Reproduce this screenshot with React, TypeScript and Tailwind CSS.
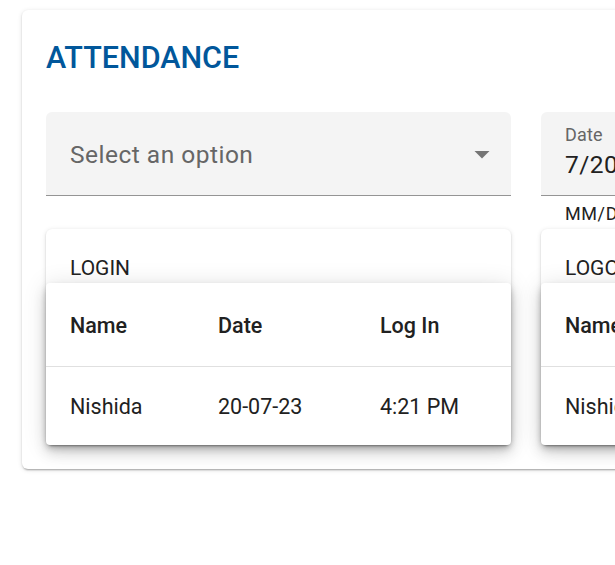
const rows = [{ name: 'Nishida', date: '20-07-23', time: '4:21 PM' }];

function LogTable({ title, timeLabel }: { title: string; timeLabel: string }) {
  return (
    <div className="w-[465px] rounded-[6px] bg-white shadow-[0_3px_2px_-2px_rgba(0,0,0,0.2),0_1px_2px_0_rgba(0,0,0,0.14),0_1px_5px_0_rgba(0,0,0,0.12)]">
      <div className="h-[54px] pl-[24px] pt-[27px] text-[21px] leading-[24px] text-[#212121]">{title}</div>
      <div className="rounded-[4px] bg-white shadow-[0_4px_7px_-1px_rgba(0,0,0,0.2),0_8px_14px_0_rgba(0,0,0,0.14),0_2px_24px_0_rgba(0,0,0,0.12)]">
        <table className="w-full table-fixed border-collapse text-left text-[21.5px] text-[#212121]">
          <colgroup>
            <col className="w-[172px]" />
            <col className="w-[162px]" />
            <col />
          </colgroup>
          <thead>
            <tr className="h-[83px] border-b border-[#e0e0e0]">
              <th className="pl-[24px] pt-[3px] font-medium">Name</th>
              <th className="pt-[3px] font-medium">Date</th>
              <th className="pt-[3px] font-medium">{timeLabel}</th>
            </tr>
          </thead>
          <tbody>
            {rows.map((r) => (
              <tr key={r.name} className="h-[79px]">
                <td className="pl-[24px] pt-[2px]">{r.name}</td>
                <td className="pt-[2px]">{r.date}</td>
                <td className="pt-[2px]">{r.time}</td>
              </tr>
            ))}
          </tbody>
        </table>
      </div>
    </div>
  );
}

export default function App() {
  return (
    <div className="h-screen w-screen overflow-hidden bg-white font-['Roboto',sans-serif]">
      <div className="ml-[22px] mt-[10px] w-[1008px] rounded-[6px] bg-white p-[24px] shadow-[0_3px_2px_-2px_rgba(0,0,0,0.2),0_1px_2px_0_rgba(0,0,0,0.14),0_1px_5px_0_rgba(0,0,0,0.12)]">
        <h1 className="pt-[6px] text-[30.5px] font-medium leading-[36px] text-[#01579b]">ATTENDANCE</h1>
        <div className="mt-[36px] flex items-start gap-[30px]">
          <div className="flex h-[84px] w-[465px] items-center justify-between rounded-t-[6px] border-b border-[#949494] bg-[#f4f4f4] pl-[24px] pr-[11px]">
            <span className="pt-[4px] text-[24.5px] tracking-[0.02em] text-[#666666]">Select an option</span>
            <svg width="36" height="36" viewBox="0 0 24 24" className="fill-[#757575]">
              <path d="M7 10l5 5 5-5z" />
            </svg>
          </div>
          <div className="w-[465px]">
            <div className="h-[84px] rounded-t-[6px] border-b border-[#949494] bg-[#f4f4f4] pl-[24px] pt-[13px]">
              <div className="text-[18px] leading-[20px] tracking-[0.01em] text-[#666666]">Date</div>
              <div className="mt-[5px] text-[24.5px] leading-[30px] tracking-[0.02em] text-[#212121]">7/20/2023</div>
            </div>
            <div className="mt-[8px] pl-[24px] text-[18px] leading-[20px] tracking-[0.033em] text-[#212121]">MM/DD/YYYY</div>
          </div>
        </div>
        <div className="mt-[5px] flex items-start gap-[30px]">
          <LogTable title="LOGIN" timeLabel="Log In" />
          <LogTable title="LOGOUT" timeLabel="Log Out" />
        </div>
      </div>
    </div>
  );
}
